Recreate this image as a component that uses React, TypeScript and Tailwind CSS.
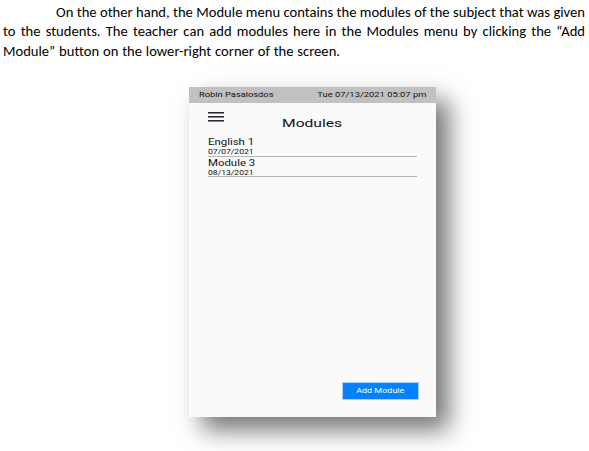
const modules = [
  { name: 'English 1', date: '07/07/2021' },
  { name: 'Module 3', date: '08/13/2021' },
];

function Intro() {
  return (
    <div className="h-[62px] pt-[3px] pl-[3px] font-['Carlito','Lato',sans-serif] text-[14.6px] leading-[19.4px] whitespace-nowrap text-black [font-variant-ligatures:none]">
      <p className="w-[582px] pl-[53px] [text-align-last:justify]">
        On the other hand, the Module menu contains the modules of the subject that was given
      </p>
      <p className="w-[582px] [text-align-last:justify]">
        to the students. The teacher can add modules here in the Modules menu by clicking the “Add
      </p>
      <p className="w-[337px] [text-align-last:justify]">Module” button on the lower-right corner of the screen.</p>
    </div>
  );
}

function MenuIcon() {
  return (
    <div className="-mt-px flex w-4 flex-col gap-[3px]">
      <span className="h-px bg-[#29272d] shadow-[0_1px_0_#8a888d]" />
      <span className="h-px bg-[#29272d] shadow-[0_1px_0_#8a888d]" />
      <span className="h-px bg-[#29272d] shadow-[0_1px_0_#8a888d]" />
    </div>
  );
}

export default function App() {
  return (
    <main className="h-[451px] w-[589px] overflow-hidden bg-white">
      <Intro />
      <section className="mt-[25px] ml-[189px] flex h-[330px] w-[247px] flex-col bg-[#fafafa] font-['Roboto',sans-serif] text-[#111] shadow-[13px_13px_23px_rgba(0,0,0,0.54)]">
        <header className="flex h-4 items-center justify-between bg-[#c1c1c1] pr-[10px] pl-[10px] text-[7px] leading-4 whitespace-nowrap">
          <span className="origin-left scale-x-[1.33]">Robin Pasalosdos</span>
          <span className="origin-right scale-x-[1.34]">Tue 07/13/2021 05:07 pm</span>
        </header>
        <div className="flex h-[33px] pt-[10px] pl-[19px]">
          <MenuIcon />
          <h1 className="ml-[58px] origin-left scale-x-[1.42] text-[11px] leading-[22px]">Modules</h1>
        </div>
        <ul className="w-[228px] pl-[19px]">
          {modules.map((module) => (
            <li key={module.name} className="flex h-[20.5px] flex-col border-b border-[#b5b5b5] whitespace-nowrap">
              <span className="origin-left scale-x-[1.34] pt-px text-[8.5px] leading-[11px]">{module.name}</span>
              <span className="origin-left scale-x-[1.32] text-[6.5px] leading-[8px]">{module.date}</span>
            </li>
          ))}
        </ul>
        <button className="mt-auto mr-[17px] mb-[17px] flex h-[18px] w-[77px] items-center justify-center self-end border border-[#a9d3ff] bg-[#0580ff] pt-px text-[6.8px] leading-none whitespace-nowrap text-white">
          <span className="scale-x-[1.32]">Add Module</span>
        </button>
      </section>
    </main>
  );
}
